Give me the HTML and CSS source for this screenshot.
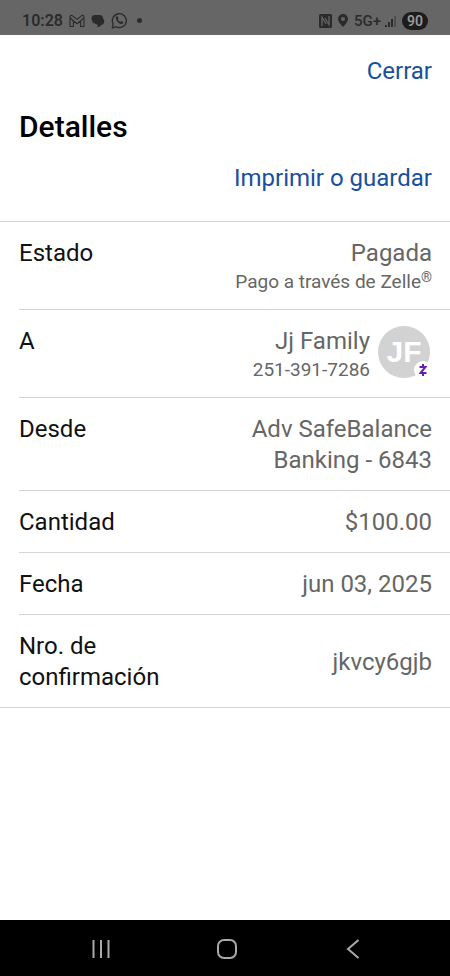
FILE: index.html
```html
<!DOCTYPE html>
<html lang="es">
<head>
<meta charset="utf-8">
<meta name="viewport" content="width=device-width, initial-scale=1">
<title>Detalles</title>
<link rel="stylesheet" href="styles.css">
</head>
<body>
<header class="status">
  <div class="status-group">
    <span class="clock">10:28</span>
    <svg width="16" height="14" viewBox="0 0 16 14" fill="none" stroke="currentColor" stroke-width="1.1" stroke-linejoin="round"><path d="M1 12.5V2.800Q1.200.8 3.200 1.600L8 5.400 12.800 1.600Q14.800.8 15 2.800v9.700h-3.400V7L8 9.800 4.400 7v5.500Z"/><path d="M1.300 4L4.400 7M14.700 4L11.600 7"/></svg>
    <svg width="14" height="14" viewBox="0 0 14 14" fill="currentColor"><path d="M4 1h4.500A3.500 3.500 0 0 1 12 4.500A3.600 3.600 0 0 1 13.300 7.200 3.600 3.600 0 0 1 10.500 10.800Q9.200 12.800 6.200 13.300l.6-2.500Q4.200 10.600 3.300 8.800L1.500 9.600 1.800 7.600A3.600 3.600 0 0 1 .5 4.700 3.600 3.600 0 0 1 4 1Z"/></svg>
    <svg width="17" height="17" viewBox="0 0 17 17" fill="none" stroke="currentColor" stroke-width="1.300"><path d="M1.200 15.800l1-3.800A7 7 0 1 1 5 14.800Z" stroke-linejoin="round"/><path d="M5.300 4.500l1.300-.2.900 2-.8 1q1 1.900 2.800 2.700l.9-1.100 2 1-.1 1.200q-1 1.300-2.800.8Q5.800 10.500 4.800 6.600q-.1-1.300.5-2.100Z" fill="currentColor" stroke="none"/></svg>
    <span class="dot"></span>
  </div>
  <div class="status-group">
    <svg width="13" height="14" viewBox="0 0 13 14"><path fill="currentColor" d="M1.500 0h10A1.500 1.500 0 0 1 13 1.500v11a1.500 1.500 0 0 1-1.500 1.500h-10A1.500 1.500 0 0 1 0 12.500v-11A1.500 1.500 0 0 1 1.500 0Z"/><path d="M3 12V3.500L7.200 10M10 2v8.500L5.800 4" fill="none" stroke="#666" stroke-width="1.300"/></svg>
    <svg width="10" height="13" viewBox="0 0 10 13"><path fill="currentColor" fill-rule="evenodd" d="M5 0a5 5 0 0 1 5 5Q10 8 5 13 0 8 0 5A5 5 0 0 1 5 0Zm0 3a2 2 0 1 0 0 4 2 2 0 0 0 0-4Z"/></svg>
    <span class="network">5G+</span>
    <svg class="signal" width="11" height="12" viewBox="0 0 11 12" fill="currentColor"><path d="M0 10h2v2H0zM3 7h2v5H3zM6 4h2v8H6z"/><path d="M9 1h2v11H9z" opacity=".4"/></svg>
    <span class="battery">90</span>
  </div>
</header>
<main class="page">
  <div class="heading">
    <button class="action" type="button">Cerrar</button>
    <h1 class="title">Detalles</h1>
    <button class="action" type="button">Imprimir o guardar</button>
  </div>
  <dl class="details">
    <div class="row">
      <dt>Estado</dt>
      <dd>Pagada<span class="note">Pago a través de Zelle<sup>®</sup></span></dd>
    </div>
    <div class="row">
      <dt>A</dt>
      <dd class="person">
        <div>Jj Family<span class="note">251-391-7286</span></div>
        <div class="avatar">JF
          <span class="badge"><svg width="8" height="12" viewBox="0 0 8 12" fill="none" stroke="#6420ae" stroke-width="2"><path d="M.5 3h6L1.500 9h6M4 0v3M4 9v3"/></svg></span>
        </div>
      </dd>
    </div>
    <div class="row">
      <dt>Desde</dt>
      <dd>Adv SafeBalance Banking - 6843</dd>
    </div>
    <div class="row">
      <dt>Cantidad</dt>
      <dd>$100.00</dd>
    </div>
    <div class="row">
      <dt>Fecha</dt>
      <dd>jun 03, 2025</dd>
    </div>
    <div class="row row-center">
      <dt>Nro. de confirmación</dt>
      <dd>jkvcy6gjb</dd>
    </div>
  </dl>
</main>
<nav class="nav">
  <button type="button" aria-label="Recientes"><svg width="20" height="20" viewBox="0 0 20 20"><path d="M2.500 1v18M10 1v18M17.500 1v18"/></svg></button>
  <button type="button" aria-label="Inicio"><svg width="20" height="20" viewBox="0 0 20 20"><rect x="1" y="1" width="18" height="18" rx="6"/></svg></button>
  <button type="button" aria-label="Atrás"><svg width="20" height="20" viewBox="0 0 20 20"><path d="M15.500 1L5 10l10.500 9"/></svg></button>
</nav>
</body>
</html>
```
FILE: styles.css
```css
* {
  box-sizing: border-box;
}

body {
  margin: 0;
  min-height: 100vh;
  display: flex;
  flex-direction: column;
  background: #fff;
  color: #111;
  font-family: Roboto, "Liberation Sans", sans-serif;
  font-size: 24px;
  line-height: 31px;
}

button {
  padding: 0;
  border: 0;
  background: none;
  font: inherit;
  cursor: pointer;
}

.status {
  display: flex;
  align-items: center;
  justify-content: space-between;
  height: 35px;
  padding: 6px 22px 0;
  background: #666;
  color: #2b2b2b;
  font-size: 16px;
  font-weight: 600;
  line-height: 20px;
}

.status-group {
  display: flex;
  align-items: center;
  gap: 6px;
}

.dot {
  width: 5px;
  height: 5px;
  margin-left: 3px;
  border-radius: 50%;
  background: currentColor;
}

.network {
  font-size: 15px;
  font-weight: 500;
}

.signal {
  margin-left: -2px;
}

.battery {
  padding: 0 5px;
  border-radius: 9px;
  background: #1c1c1c;
  color: #999;
  font-size: 14px;
  line-height: 18px;
}

.page {
  flex: 1;
}

.heading {
  display: flex;
  flex-direction: column;
  align-items: flex-end;
  padding: 21px 18px 27px 19px;
  border-bottom: 1px solid #d4d4d4;
}

.action {
  color: #17509e;
}

.title {
  align-self: flex-start;
  margin: 22px 0 18px;
  color: #000;
  font-size: 30px;
  font-weight: 500;
  line-height: 36px;
}

.details {
  margin: 0;
  border-bottom: 1px solid #d4d4d4;
}

.row {
  display: flex;
  justify-content: space-between;
  gap: 24px;
  margin-left: 19px;
  padding: 16px 18px 14px 0;
}

.row + .row {
  border-top: 1px solid #d4d4d4;
}

.row-center {
  align-items: center;
}

dt {
  max-width: 160px;
}

dd {
  max-width: 205px;
  margin: 0;
  color: #666;
  text-align: right;
}

dd:has(.note) {
  max-width: none;
}

.note {
  display: block;
  font-size: 19px;
  line-height: 26px;
}

.note sup {
  font-size: 14px;
  line-height: 1;
  vertical-align: 6px;
}

.person {
  display: flex;
  gap: 8px;
}

.avatar {
  position: relative;
  width: 52px;
  height: 52px;
  margin-right: 2px;
  border-radius: 50%;
  background: #d2d2d2;
  color: #fff;
  font-family: "Liberation Sans", sans-serif;
  font-size: 30px;
  font-weight: 700;
  line-height: 52px;
  text-align: center;
}

.badge {
  position: absolute;
  right: -2px;
  bottom: -1px;
  display: grid;
  place-items: center;
  width: 18px;
  height: 18px;
  border-radius: 50%;
  background: #fff;
}

.nav {
  display: grid;
  grid-template-columns: repeat(3, 1fr);
  height: 56px;
  padding: 2px 34px 0 38px;
  background: #000;
}

.nav button {
  display: grid;
  place-items: center;
}

.nav svg {
  fill: none;
  stroke: #aaa;
  stroke-width: 2;
}
```
